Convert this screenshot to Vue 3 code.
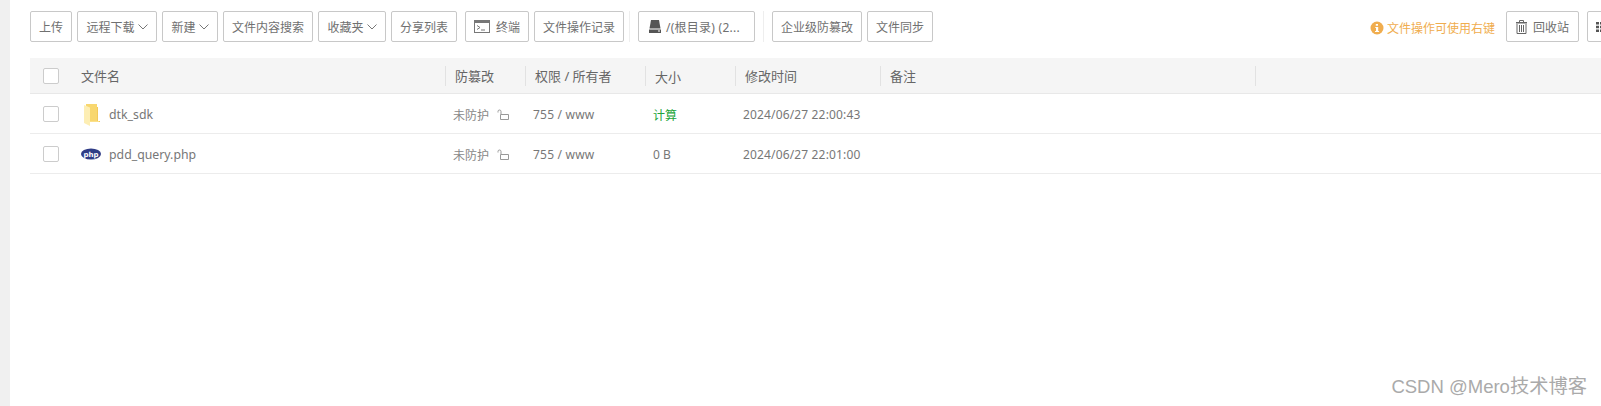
<script setup>
const leftTools = [
  { label: '上传', width: 42 },
  { label: '远程下载', width: 80, arrow: true },
  { label: '新建', width: 56, arrow: true },
  { label: '文件内容搜索', width: 90 },
  { label: '收藏夹', width: 68, arrow: true },
  { label: '分享列表', width: 66 },
]

const files = [
  { name: 'dtk_sdk', type: 'dir', size: '计算', time: '2024/06/27 22:00:43' },
  { name: 'pdd_query.php', type: 'php', size: '0 B', time: '2024/06/27 22:01:00' },
]
</script>

<template>
  <div class="page">
    <div class="content">
      <div class="toolbar">
        <button v-for="t in leftTools" :key="t.label" class="btn" :style="{ width: t.width + 'px' }">
          {{ t.label }}
          <svg v-if="t.arrow" class="arrow" width="10" height="6" viewBox="0 0 10 6"><path d="M.5.5 5 5 9.500.5" fill="none" stroke="#777" stroke-width="1"/></svg>
        </button>
        <button class="btn btn-term">
          <svg width="16" height="14" viewBox="0 0 16 14">
            <rect x=".5" y=".5" width="15" height="12" fill="#fff" stroke="#777"/>
            <rect x="0" y="0" width="16" height="3" fill="#777"/>
            <path d="M3 5.500 6 7.500 3 9.500M7 10h4" fill="none" stroke="#777"/>
          </svg>
          <span>终端</span>
        </button>
        <button class="btn btn-log">文件操作记录</button>
        <i class="sep"></i>
        <button class="btn btn-disk">
          <svg width="12" height="13" viewBox="0 0 12 13">
            <path d="M2 0H10L11.500 8.500H.5Z" fill="#555"/>
            <path d="M0 9.500H12V13H0Z" fill="#555"/>
            <rect x="9" y="10.500" width="2" height="1" fill="#fff"/>
          </svg>
          <span class="disk-text">/(根目录) (2...</span>
        </button>
        <i class="sep sep-b"></i>
        <button class="btn btn-tamper">企业级防篡改</button>
        <button class="btn btn-sync">文件同步</button>

        <div class="tool-right">
          <span class="tip">
            <svg width="14" height="14" viewBox="0 0 14 14">
              <circle cx="7" cy="7" r="6.500" fill="#f0ad4e"/>
              <path d="M5.800 3h2.200v1.800H5.800ZM5.300 6h2.900v4h.9v1H5v-1h1V7h-.7Z" fill="#fff"/>
            </svg>
            文件操作可使用右键
          </span>
          <button class="btn btn-bin">
            <svg width="11" height="14" viewBox="0 0 11 14">
              <path d="M3.500 2V.5H7.500V2" fill="none" stroke="#666"/>
              <rect x="0" y="2" width="11" height="1.500" fill="#666"/>
              <path d="M1 4V13.500H10V4M3.500 5V12M5.500 5V12M7.500 5V12" fill="none" stroke="#666"/>
            </svg>
            <span>回收站</span>
          </button>
          <button class="btn btn-more">
            <svg width="7" height="10" viewBox="0 0 7 10"><path d="M0 0h3v2.500H0ZM4 0h3v2.500H4ZM0 3.700h3v2.500H0ZM4 3.700h3v2.500H4ZM0 7.400h3v2.500H0ZM4 7.400h3v2.500H4Z" fill="#555"/></svg>
          </button>
        </div>
      </div>

      <div class="table">
        <div class="row head">
          <div class="cell c-check"><span class="check"></span></div>
          <div class="cell c-name">文件名</div>
          <div class="cell c-protect">防篡改</div>
          <div class="cell c-perm">权限 / 所有者</div>
          <div class="cell c-size">大小</div>
          <div class="cell c-time">修改时间</div>
          <div class="cell c-note">备注</div>
          <div class="cell c-end"></div>
        </div>
        <div v-for="f in files" :key="f.name" class="row">
          <div class="cell c-check"><span class="check"></span></div>
          <div class="cell c-name">
            <svg v-if="f.type === 'dir'" class="file-icon" width="20" height="24" viewBox="0 0 20 24">
              <path d="M5 2H16V19H5Z" fill="#f8d76f"/>
              <path d="M16 5H17V19H19V20H16Z" fill="#f3c95a"/>
              <path d="M3 3 9 5.500V24L3 21Z" fill="#fdeeb4"/>
              <path d="M9 13V19H18V20H9Z" fill="#fbe08a"/>
            </svg>
            <svg v-else class="file-icon" width="20" height="24" viewBox="0 0 20 24">
              <ellipse cx="10" cy="12" rx="10" ry="5.500" fill="#2f3c86"/>
              <text x="10" y="14.500" text-anchor="middle" class="php-text">php</text>
            </svg>
            <span class="fname">{{ f.name }}</span>
          </div>
          <div class="cell c-protect body-protect">
            未防护
            <svg class="lock" width="12" height="12" viewBox="0 0 12 12">
              <path d="M1 3.500V2.500A1.500 1.500 0 0 1 4 2.500V5M3.500 5.500H11.500V10.500H3.500Z" fill="none" stroke="#999"/>
            </svg>
          </div>
          <div class="cell c-perm perm-text">755 / www</div>
          <div class="cell c-size" :class="{ calc: f.type === 'dir' }">{{ f.size }}</div>
          <div class="cell c-time time-text">{{ f.time }}</div>
          <div class="cell c-note"></div>
          <div class="cell c-end"></div>
        </div>
      </div>
    </div>
    <div class="mark">CSDN @Mero<span class="mark-cn">技术博客</span></div>
  </div>
</template>

<style>
html, body {
  margin: 0;
  overflow: hidden;
  background: #fff;
}
</style>

<style scoped>
.page {
  position: relative;
  width: 1601px;
  height: 406px;
  overflow: hidden;
  background: #fff;
  border-left: 10px solid #f0f0f0;
  box-sizing: border-box;
  font-family: "Noto Sans", "Noto Sans CJK SC", sans-serif;
  font-size: 12px;
  color: #777;
}
.content {
  padding: 11px 0 0 20px;
}
.toolbar {
  display: flex;
  align-items: center;
  gap: 5px;
  height: 31px;
  width: 1607px;
}
.btn {
  flex: none;
  display: inline-flex;
  align-items: center;
  justify-content: center;
  height: 31px;
  padding: 0;
  border: 1px solid #c8c8c8;
  border-radius: 2px;
  background: #fff;
  color: #707070;
  font: inherit;
  box-sizing: border-box;
}
.arrow {
  margin-left: 3px;
}
.sep {
  flex: none;
  width: 1px;
  height: 31px;
  background: #eee;
}
.btn-term {
  width: 64px;
  margin-left: 3px;
  gap: 6px;
}
.btn-log { width: 90px; }
.btn-disk {
  width: 117px;
  justify-content: flex-start;
  padding-left: 10px;
  gap: 5px;
  margin-left: 3px;
}
.disk-text {
  letter-spacing: .25px;
}
.btn-tamper {
  width: 90px;
  margin-left: 3px;
}
.btn-sync { width: 66px; }
.sep-b { margin-left: 3px; }
.tool-right {
  display: flex;
  align-items: center;
  margin-left: auto;
}
.tip {
  display: inline-flex;
  align-items: center;
  gap: 3px;
  color: #f0ad4e;
  margin-right: 11px;
  padding-top: 2px;
}
.btn-bin {
  width: 73px;
  gap: 6px;
  margin-right: 8px;
}
.btn-more {
  width: 50px;
  justify-content: flex-start;
  padding-left: 8px;
}
.table {
  margin-top: 16px;
}
.row {
  display: flex;
  height: 40px;
  border-bottom: 1px solid #ececec;
  box-sizing: border-box;
  align-items: center;
}
.head {
  height: 36px;
  background: #f5f5f5;
  color: #666;
  border-bottom-color: #e8e8e8;
}
.cell {
  flex: none;
  box-sizing: border-box;
  display: flex;
  align-items: center;
  height: 20px;
  padding-left: 8px;
}
.head .cell {
  border-left: 1px solid #e2e2e2;
  padding-left: 9px;
  font-size: 13px;
}
.head .c-name {
  border-left: 0;
  padding-left: 0;
}
.row .c-name {
  width: 364px;
  padding-left: 0;
}
.row .c-check,
.head .c-check {
  width: 51px;
  padding-left: 13px;
  border-left: 0;
}
.c-protect { width: 80px; }
.c-perm { width: 120px; }
.c-size { width: 90px; }
.c-time { width: 145px; }
.c-note { width: 375px; }
.c-end { width: 300px; }
.check {
  display: block;
  width: 16px;
  height: 16px;
  box-sizing: border-box;
  border: 1px solid #ccc;
  border-radius: 2px;
  background: #fff;
}
.file-icon {
  flex: none;
  margin-right: 8px;
}
.php-text {
  font-family: "DejaVu Sans", sans-serif;
  font-size: 7px;
  font-weight: 700;
  fill: #fff;
}
.fname {
  font-size: 12.300px;
  padding-top: 2px;
}
.body-protect,
.perm-text,
.time-text,
.row .c-size {
  padding-top: 2px;
}
.body-protect {
  color: #888;
}
.perm-text {
  letter-spacing: .2px;
}
.time-text {
  letter-spacing: .15px;
}
.lock {
  margin-left: 8px;
}
.row .calc {
  color: #20a53a;
}
.mark {
  position: absolute;
  right: 14px;
  bottom: 6px;
  font-family: "Liberation Sans", "Noto Sans CJK SC", sans-serif;
  font-size: 18.500px;
  line-height: 26px;
  color: #aaa;
}
.mark-cn {
  font-size: 19.300px;
}
</style>
